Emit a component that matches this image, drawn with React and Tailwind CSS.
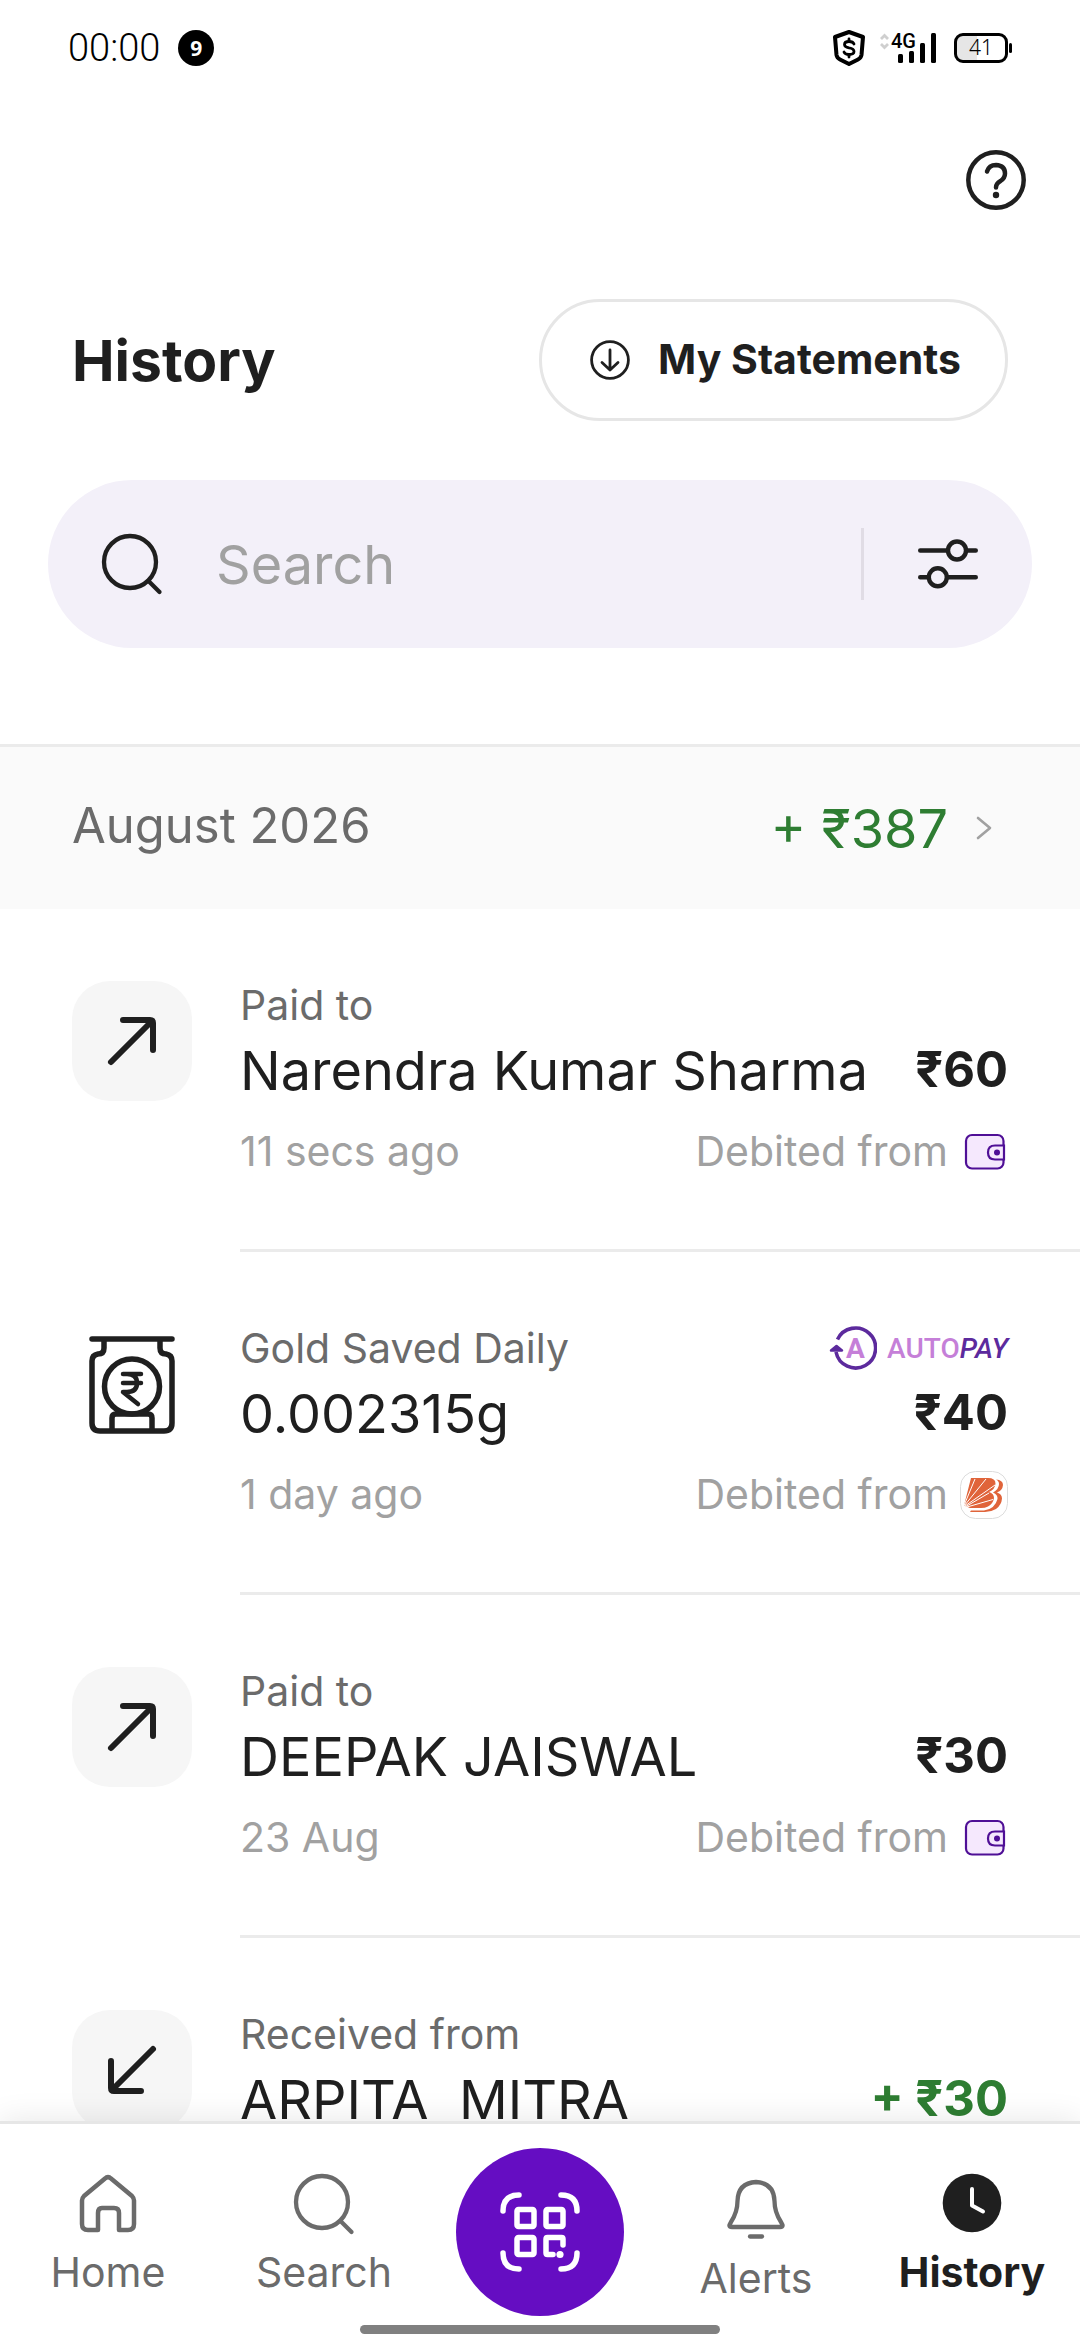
const StatusBar = () => (
  <div className="flex h-24 items-center justify-between px-[68px] text-black">
    <div className="flex items-center gap-[18px]">
      <span className="font-[Roboto,sans-serif] text-[38px] leading-none font-light">00:00</span>
      <span className="flex size-9 items-center justify-center rounded-full bg-black font-['Open_Sans',sans-serif] text-[21px] leading-none font-bold text-white">
        9
      </span>
    </div>
    <div className="flex items-center">
      <svg className="mr-[14px] h-9 w-8" viewBox="0 0 32 36" fill="none" stroke="currentColor" strokeLinejoin="round" strokeLinecap="round">
        <path d="M16 2 L30 7 L28.5 25 Q28 28 25 29.5 L16 34 L7 29.5 Q4 28 3.5 25 L2 7 Z" strokeWidth="4" />
        <path d="M21 14 Q20 11.5 16 11.5 Q11.5 11.5 11.5 14.5 Q11.5 17 16 17.800 Q21 18.5 21 21.5 Q21 24.5 16 24.5 Q12 24.5 11 22" strokeWidth="2.8" />
        <path d="M16 9 V11 M16 25 V27" strokeWidth="2.8" />
      </svg>
      <svg className="mr-[17px] h-[38px] w-[58px]" viewBox="0 -4 58 38" fill="currentColor">
        <path d="M2 6 L5.5 2.5 L9 6 M2 11 L5.5 14.5 L9 11" fill="none" stroke="#cfcfcf" strokeWidth="2.8" />
        <text x="12" y="15" fontSize="20" fontFamily="Roboto, sans-serif" fontWeight="500">4G</text>
        <rect x="19" y="21" width="5" height="9" rx="1.5" />
        <rect x="30" y="18" width="5" height="12" rx="1.5" />
        <rect x="41" y="10" width="5" height="20" rx="1.5" />
        <rect x="52" y="0" width="5" height="30" rx="1.5" />
      </svg>
      <svg className="h-[30px] w-[58px]" viewBox="0 0 58 30" fill="none">
        <path d="M9 2 H23 V28 H9 Q2 28 2 21 V9 Q2 2 9 2 Z" fill="#e6e6e6" />
        <rect x="1.5" y="1.5" width="51" height="27" rx="7.5" stroke="#000" strokeWidth="3" />
        <rect x="55" y="10" width="3" height="10" rx="1.5" fill="#000" />
        <text x="27" y="22" fontSize="21" fontFamily="Noto Sans, sans-serif" fontWeight="300" textAnchor="middle" fill="#000">41</text>
      </svg>
    </div>
  </div>
);

const HelpIcon = () => (
  <svg className="size-[60px]" viewBox="0 0 60 60" fill="none" stroke="currentColor" strokeWidth="4.5" strokeLinecap="round">
    <circle cx="30" cy="30" r="27.7" />
    <path d="M21 21.5 Q23 15 30 15 Q39 15.5 39 23.5 Q39 28 34.5 31 Q30 33.5 30 37.5" />
    <circle cx="30" cy="45" r="3.2" fill="currentColor" stroke="none" />
  </svg>
);

const DownloadIcon = () => (
  <svg className="size-10" viewBox="0 0 40 40" fill="none" stroke="currentColor" strokeWidth="2.8" strokeLinecap="round" strokeLinejoin="round">
    <circle cx="20" cy="20" r="18.4" />
    <path d="M20 10 V30 M12 22.5 L20 30 L28 22.5" />
  </svg>
);

const SearchIcon = () => (
  <svg className="size-[72px]" viewBox="0 0 72 72" fill="none" stroke="currentColor" strokeWidth="4.3" strokeLinecap="round">
    <circle cx="34" cy="34" r="26" />
    <path d="M52.5 53 L63.5 64" />
  </svg>
);

const FilterIcon = () => (
  <svg className="h-[50px] w-[60px]" viewBox="0 0 60 50" fill="none" stroke="currentColor" strokeWidth="4.4" strokeLinecap="round">
    <path d="M2.2 11.5 H29 M49 11.5 H57.8 M2.2 38.3 H10 M30 38.3 H57.8" />
    <circle cx="39" cy="11.5" r="9" />
    <circle cx="19.8" cy="38.3" r="9" />
  </svg>
);

const OutIcon = () => (
  <svg className="size-[120px] rounded-[38px] bg-[#f6f6f6]" viewBox="0 0 120 120" fill="none" stroke="currentColor" strokeWidth="6" strokeLinecap="round" strokeLinejoin="round">
    <path d="M39 81 L80 40 M51 39 H78 Q81 39 81 42 V69" />
  </svg>
);

const InIcon = () => (
  <svg className="size-[120px] rounded-[38px] bg-[#f6f6f6]" viewBox="0 0 120 120" fill="none" stroke="currentColor" strokeWidth="6" strokeLinecap="round" strokeLinejoin="round">
    <path d="M81 39 L40 80 M39 51 V78 Q39 81 42 81 H69" />
  </svg>
);

const JarIcon = () => (
  <svg className="size-[120px]" viewBox="0 0 120 120" fill="none" stroke="currentColor" strokeWidth="5.5" strokeLinecap="round" strokeLinejoin="round">
    <path d="M20 15 H100 M32 15 V24 Q32 30 26 30 Q20 31 20 37 V99 Q20 107 28 107 H92 Q100 107 100 99 V37 Q100 31 94 30 Q88 30 88 24 V15" />
    <circle cx="60" cy="62.5" r="27.5" />
    <path d="M40 106 V94 Q40 90 44 90 H76 Q80 90 80 94 V106" />
    <path d="M51 50 H69 M51 59 H69 M55 50 Q65 50 65 59 Q65 68 55 68 H51 L66 80" strokeWidth="4.5" />
  </svg>
);

const WalletIcon = () => (
  <svg className="size-12" viewBox="0 0 48 48" fill="#f5e8fd" stroke="#4f0f96" strokeWidth="2.2">
    <rect x="6" y="7" width="37.5" height="33.5" rx="6" />
    <path d="M44 17.5 H35 Q28 17.5 28 24.5 Q28 31.5 35 31.5 H44 Z" />
    <circle cx="37" cy="24.5" r="3" fill="#4f0f96" stroke="none" />
  </svg>
);

const BankIcon = () => (
  <svg className="size-12" viewBox="0 0 48 48" fill="none">
    <rect x="0.5" y="0.5" width="47" height="47" rx="15" fill="#fff" stroke="#dcdcdc" />
    <path d="M36 8.5 Q43 9 43 14 Q42.5 19.5 37 21.5 Q42 23 42 27.5 Q41.5 34 36 38 Q31 41 25 41 H10 L11 39.5 H24 Q35 38 37.5 28 Q38 23.5 33 21.5 Q39 18 39 13 Q39 10 36 8.5 Z" fill="#e0643a" />
    <path d="M11 7 H28 Q35.5 7 35.5 12.5 Q35 18.5 29 21 Q34 22.5 34 27 Q33 33 28 35.5 Q25 37 21 37 H10 L4 34.5 Z" fill="#e0643a" />
    <path d="M4 34.5 L15 8 M4.5 34.5 L26 8 M5 35 L35 14 M6 35.5 L29 22 M7 36 L33 28.5" stroke="#fff" strokeWidth="1" />
  </svg>
);

const AutopayLogo = () => (
  <span className="flex items-center gap-[10px]">
    <svg className="size-12" viewBox="0 0 48 48" fill="none" stroke="#5c2a9d" strokeWidth="3.6">
      <path d="M8.5 14.5 A20 20 0 1 1 7 27" />
      <path d="M2 25.5 L7.5 21 L13 25.5 Z" fill="#5c2a9d" strokeWidth="2.5" strokeLinejoin="round" />
      <text x="26.5" y="33" fontSize="28" fontFamily="Roboto, sans-serif" fontWeight="700" textAnchor="middle" fill="#c57fd8" stroke="none">A</text>
    </svg>
    <span className="font-[Roboto,sans-serif] text-[28px] leading-none font-medium text-[#c57fd8]">
      AUTO<i className="text-[#5c2a9d]">PAY</i>
    </span>
  </span>
);

const HomeIcon = () => (
  <svg className="size-[72px]" viewBox="0 0 72 72" fill="none" stroke="currentColor" strokeWidth="4.5" strokeLinejoin="round">
    <path d="M33 10.5 Q36 7.5 39 10.5 L60 28 Q62 30 62 32.5 V56 Q62 62 56 62 H47 V45 Q47 40 42 40 H30 Q26 40 26 45 V62 H16 Q10 62 10 56 V32.5 Q10 30 12 28 Z" />
  </svg>
);

const ScanIcon = () => (
  <svg className="size-20" viewBox="0 0 80 80" fill="none" stroke="#fff" strokeWidth="5.5" strokeLinecap="round" strokeLinejoin="round">
    <path d="M3 19 Q3 3 19 3 M61 3 Q77 3 77 19 M3 61 Q3 77 19 77 M61 77 Q77 77 77 61" />
    <rect x="17" y="17.5" width="17" height="17" rx="1.5" />
    <rect x="46" y="17.5" width="17" height="17" rx="1.5" />
    <rect x="17" y="45.5" width="17" height="17" rx="1.5" />
    <path d="M53 62.5 H47.5 Q46 62.5 46 61 V47 Q46 45.5 47.5 45.5 H61.5 Q63 45.5 63 47 V53" />
    <circle cx="60" cy="62.5" r="3.6" fill="#fff" stroke="none" />
  </svg>
);

const BellIcon = () => (
  <svg className="h-[78px] w-[72px]" viewBox="0 0 72 78" fill="none" stroke="currentColor" strokeWidth="4.3" strokeLinecap="round" strokeLinejoin="round">
    <path d="M36 14 Q54 15 54.5 33 Q54.5 44 61 54 L62.5 57 Q63 59 60 59 H12 Q9 59 9.5 57 L11 54 Q17.5 44 17.5 33 Q18 15 36 14 Z" />
    <path d="M30 68.5 H42" />
  </svg>
);

const ClockIcon = () => (
  <svg className="size-[72px]" viewBox="0 0 72 72" fill="none">
    <circle cx="36" cy="35" r="29.3" fill="#1f1f1f" />
    <path d="M36 21 V37.5 L47 43.5" stroke="#fff" strokeWidth="4" strokeLinecap="round" strokeLinejoin="round" />
  </svg>
);

const transactions = [
  { id: 1, icon: OutIcon, label: 'Paid to', name: 'Narendra Kumar Sharma', amount: '₹60', time: '11 secs ago', source: WalletIcon },
  { id: 2, icon: JarIcon, label: 'Gold Saved Daily', name: '0.002315g', amount: '₹40', time: '1 day ago', source: BankIcon, autopay: true },
  { id: 3, icon: OutIcon, label: 'Paid to', name: 'DEEPAK JAISWAL', amount: '₹30', time: '23 Aug', source: WalletIcon },
  { id: 4, icon: InIcon, label: 'Received from', name: 'ARPITA  MITRA', amount: '+ ₹30', credit: true },
];

const TransactionItem = ({ item }) => {
  const Icon = item.icon;
  const Source = item.source;
  return (
    <li className="flex gap-12 pt-[72px] pl-[72px]">
      <div className="shrink-0"><Icon /></div>
      <div className="min-w-0 flex-1 border-b-[3px] border-[#ebebeb] pr-[72px] pb-[70px]">
        <div className="flex h-[50px] items-center justify-between text-[41px] text-[#6b6b6b]">
          <span>{item.label}</span>
          {item.autopay && <AutopayLogo />}
        </div>
        <div className="flex h-[78px] items-center justify-between">
          <span className="text-[54px] whitespace-pre">{item.name}</span>
          <span className={item.credit ? 'text-[49px] font-bold text-[#2e7d32]' : 'text-[49px] font-bold'}>{item.amount}</span>
        </div>
        <div className="mt-4 flex h-[54px] items-center justify-between text-[41px] text-[#a1a1a1]">
          <span>{item.time}</span>
          {Source && (
            <span className="flex items-center gap-3">
              Debited from <Source />
            </span>
          )}
        </div>
      </div>
    </li>
  );
};

const navItems = [
  { label: 'Home', icon: HomeIcon },
  { label: 'Search', icon: SearchIcon },
  { label: 'Scan' },
  { label: 'Alerts', icon: BellIcon },
  { label: 'History', icon: ClockIcon, active: true },
];

const BottomNav = () => (
  <nav className="relative z-10 shrink-0 border-t-[3px] border-[#e6e6e6] bg-white shadow-[0_0_30px_rgba(0,0,0,0.1)]">
    <div className="grid grid-cols-5 pt-6">
      {navItems.map(({ label, icon: Icon, active }) =>
        Icon ? (
          <a
            key={label}
            href="#"
            className={
              active
                ? 'flex flex-col items-center gap-2 pt-5 text-[41px] leading-[48px] font-bold text-[#1f1f1f]'
                : 'flex flex-col items-center gap-2 pt-5 text-[41px] leading-[48px] text-[#6b6b6b]'
            }
          >
            <Icon />
            {label}
          </a>
        ) : (
          <button key={label} aria-label={label} className="flex size-[168px] items-center justify-center justify-self-center rounded-full bg-[#650dc2]">
            <ScanIcon />
          </button>
        )
      )}
    </div>
    <div className="mx-auto mt-[9px] mb-[6px] h-[9px] w-1/3 rounded-full bg-[#808080]" />
  </nav>
);

const App = () => {
  return (
    <div className="flex h-screen flex-col overflow-hidden bg-white font-[Inter,sans-serif] text-[#1f1f1f]">
      <header className="shrink-0">
        <StatusBar />
        <div className="flex justify-end pt-[54px] pr-[54px]">
          <button aria-label="Help"><HelpIcon /></button>
        </div>
        <div className="mt-[89px] flex items-center justify-between px-[72px]">
          <h1 className="text-[57px] leading-none font-bold">History</h1>
          <button className="flex h-[122px] items-center gap-7 rounded-full border-[3px] border-[#e6e6e6] pr-11 pl-12 text-[41px] font-bold">
            <DownloadIcon />
            My Statements
          </button>
        </div>
        <div className="mx-12 mt-[59px] mb-24 flex h-[168px] items-center rounded-full bg-[#f3f0f9] pl-12">
          <label htmlFor="search" aria-label="Search"><SearchIcon /></label>
          <input
            id="search"
            type="text"
            placeholder="Search"
            className="ml-12 min-w-0 flex-1 bg-transparent text-[54px] outline-none placeholder:text-[#a1a1a1]"
          />
          <button aria-label="Filters" className="flex h-[72px] items-center border-l-[3px] border-[#e0dce5] px-[54px]">
            <FilterIcon />
          </button>
        </div>
      </header>

      <main className="min-h-0 flex-1 overflow-hidden">
        <div className="flex h-[165px] items-center justify-between border-t-[3px] border-[#ebebeb] bg-[#fafafa] pr-[88px] pl-[72px]">
          <h2 className="pb-1 text-[49px] text-[#6b6b6b]">August 2026</h2>
          <button className="flex items-center gap-7 text-[54px] text-[#2e7d32]">
            + ₹387
            <svg className="h-6 w-4" viewBox="0 0 16 24" fill="none" stroke="#a1a1a1" strokeWidth="2.6" strokeLinecap="round" strokeLinejoin="round">
              <path d="M2 2 L14 12 L2 22" />
            </svg>
          </button>
        </div>
        <ul>
          {transactions.map((item) => (
            <TransactionItem key={item.id} item={item} />
          ))}
        </ul>
      </main>

      <BottomNav />
    </div>
  );
};

export default App;
